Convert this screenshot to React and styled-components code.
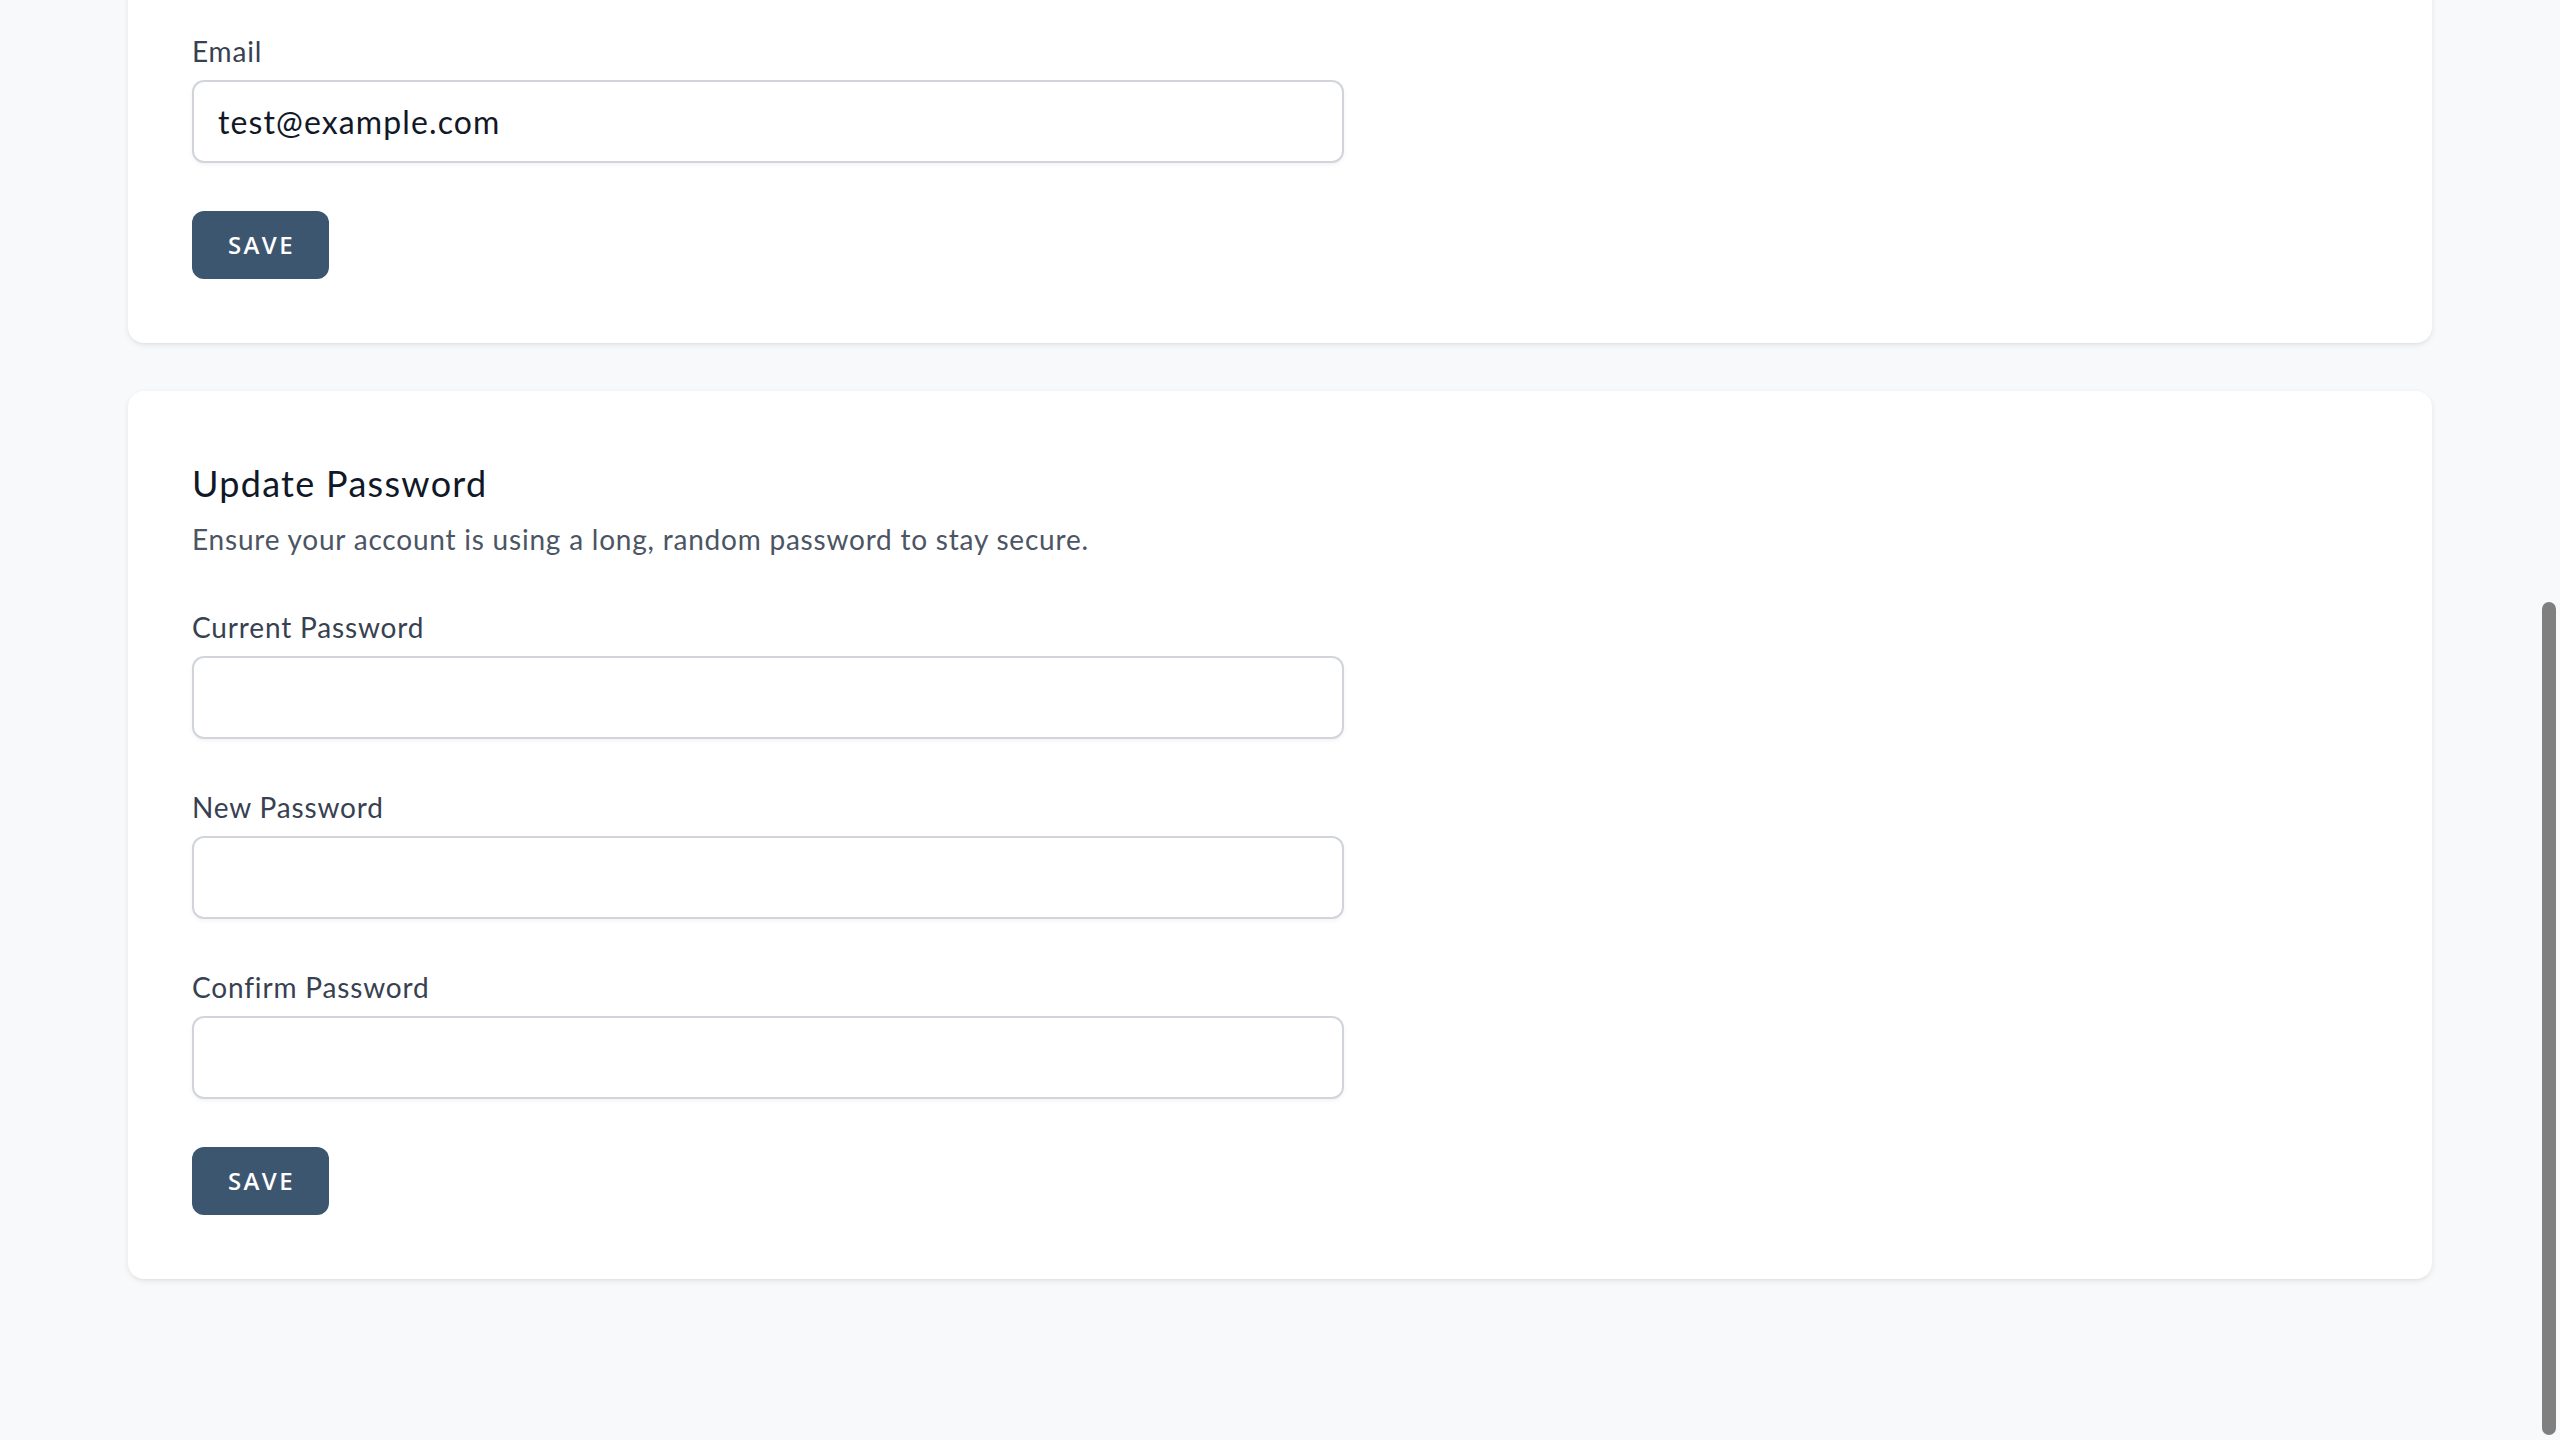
import React from "react";
import styled, { createGlobalStyle } from "styled-components";

const GlobalStyle = createGlobalStyle`
  html, body {
    margin: 0;
    padding: 0;
    background: #f8f9fb;
    overflow: hidden;
  }
  body {
    font-family: "Lato", "Open Sans", sans-serif;
    -webkit-font-smoothing: antialiased;
  }
  * { box-sizing: border-box; }
`;

const Page = styled.main`
  width: 2304px;
  margin: -33px auto 0;
  display: flex;
  flex-direction: column;
  gap: 48px;
  padding-bottom: 120px;
`;

const Card = styled.section`
  background: #ffffff;
  border-radius: 16px;
  box-shadow: 0 2px 6px rgba(0, 0, 0, 0.08), 0 2px 4px -2px rgba(0, 0, 0, 0.06);
  padding: 64px;
  display: flex;
  flex-direction: column;
`;

const Header = styled.header`
  display: flex;
  flex-direction: column;
  gap: 8px;
  margin-bottom: 48px;
`;

const Title = styled.h2`
  margin: 0;
  font-size: 36px;
  line-height: 56px;
  font-weight: 400;
  letter-spacing: 0.036em;
  color: #111827;
`;

const Description = styled.p`
  margin: 0;
  font-size: 28px;
  line-height: 40px;
  font-weight: 400;
  letter-spacing: 0.028em;
  color: #4b5563;
`;

const Form = styled.form`
  display: flex;
  flex-direction: column;
  gap: 48px;
  max-width: 1152px;
`;

const Field = styled.div`
  display: flex;
  flex-direction: column;
  gap: 9px;
`;

const Label = styled.label`
  font-size: 28px;
  line-height: 40px;
  font-weight: 400;
  letter-spacing: 0.03em;
  color: #374151;
`;

const Input = styled.input`
  width: 100%;
  height: 83px;
  padding: 0 24px;
  border: 2px solid #d1d5db;
  border-radius: 12px;
  background: #fff;
  box-shadow: 0 2px 4px rgba(0, 0, 0, 0.05);
  font-family: "Lato", "Open Sans", sans-serif;
  font-size: 32px;
  letter-spacing: 0.035em;
  color: #111827;
  outline: none;
`;

const Button = styled.button`
  align-self: flex-start;
  background: #3d5670;
  color: #ffffff;
  border: 2px solid transparent;
  border-radius: 12px;
  padding: 16px 32px 16px 34px;
  font-family: "Open Sans", "Lato", sans-serif;
  font-size: 24px;
  line-height: 32px;
  font-weight: 600;
  letter-spacing: 0.1em;
  text-transform: uppercase;
  cursor: pointer;
`;

const Scrollbar = styled.div`
  position: fixed;
  top: 602px;
  right: 4px;
  width: 14px;
  height: 833px;
  border-radius: 7px;
  background: #7f7f7f;
`;

export default function App() {
  return (
    <>
      <GlobalStyle />
      <Page>
        <Card>
          <Form onSubmit={(e) => e.preventDefault()}>
            <Field>
              <Label htmlFor="email">Email</Label>
              <Input id="email" type="email" defaultValue="test@example.com" />
            </Field>
            <Button type="submit">Save</Button>
          </Form>
        </Card>
        <Card>
          <Header>
            <Title>Update Password</Title>
            <Description>
              Ensure your account is using a long, random password to stay secure.
            </Description>
          </Header>
          <Form onSubmit={(e) => e.preventDefault()}>
            <Field>
              <Label htmlFor="current_password">Current Password</Label>
              <Input id="current_password" type="password" />
            </Field>
            <Field>
              <Label htmlFor="password">New Password</Label>
              <Input id="password" type="password" />
            </Field>
            <Field>
              <Label htmlFor="password_confirmation">Confirm Password</Label>
              <Input id="password_confirmation" type="password" />
            </Field>
            <Button type="submit">Save</Button>
          </Form>
        </Card>
      </Page>
      <Scrollbar />
    </>
  );
}
